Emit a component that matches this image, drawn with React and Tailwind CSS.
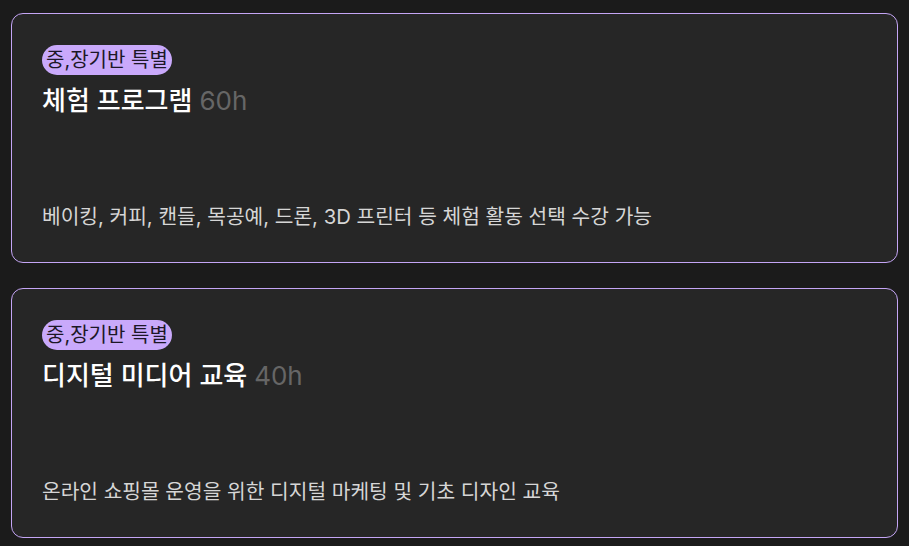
const programs = [
  {
    tag: '중,장기반 특별',
    title: '체험 프로그램',
    hours: '60h',
    desc: '베이킹, 커피, 캔들, 목공예, 드론, 3D 프린터 등 체험 활동 선택 수강 가능',
  },
  {
    tag: '중,장기반 특별',
    title: '디지털 미디어 교육',
    hours: '40h',
    desc: '온라인 쇼핑몰 운영을 위한 디지털 마케팅 및 기초 디자인 교육',
  },
];

function ProgramCard({ program }) {
  return (
    <div className="flex h-[250px] flex-col rounded-xl border border-[#c4a5f5] bg-[#262626] pt-[31px] pb-[30px] pl-[30px] pr-8">
      <div className="flex">
        <span className="flex h-[30px] items-center rounded-full bg-[#c9a9fb] px-[4px] text-[20px] text-[#1c1726]">
          {program.tag}
        </span>
      </div>
      <h3 className="mt-[9px] text-[26px] leading-[34px] font-medium text-white">
        {program.title} <span className="font-normal text-[#666666]">{program.hours}</span>
      </h3>
      <p className="mt-auto text-[20.3px] leading-[30px] text-[#d6d6d6]">{program.desc}</p>
    </div>
  );
}

export default function App() {
  return (
    <div
      className="min-h-screen w-full bg-[#1b1b1b] px-[11px] pt-[13px]"
      style={{ fontFamily: 'Inter, "Noto Sans CJK KR", sans-serif' }}
    >
      <div className="flex flex-col gap-[25px]">
        {programs.map((program, index) => (
          <ProgramCard key={index} program={program} />
        ))}
      </div>
    </div>
  );
}
